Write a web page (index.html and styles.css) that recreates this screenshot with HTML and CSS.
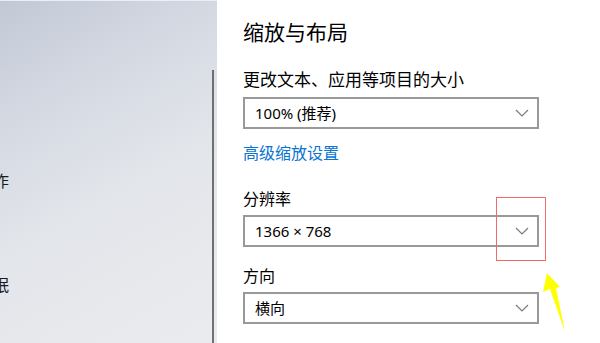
FILE: index.html
```html
<!DOCTYPE html>
<html lang="zh-CN">
<head>
<meta charset="utf-8">
<title>缩放与布局</title>
<link rel="stylesheet" href="styles.css">
</head>
<body>
<div class="page">
  <aside class="sidebar">
    <ul class="nav">
      <li>通知和操作</li>
      <li>电源和睡眠</li>
    </ul>
    <div class="scrollbar"></div>
  </aside>
  <main class="content">
    <h1 class="title">缩放与布局</h1>
    <div class="label label-wide">更改文本、应用等项目的大小</div>
    <div class="select">
      <span class="select-text">100% (推荐)</span>
      <svg class="chevron" width="14" height="8" viewBox="0 0 14 8"><polyline points="1,1 7,7 13,1" fill="none" stroke="#7a7a7a" stroke-width="1.2"/></svg>
    </div>
    <a class="link">高级缩放设置</a>
    <div class="label label-res">分辨率</div>
    <div class="select">
      <span class="select-text">1366 × 768</span>
      <svg class="chevron" width="14" height="8" viewBox="0 0 14 8"><polyline points="1,1 7,7 13,1" fill="none" stroke="#7a7a7a" stroke-width="1.2"/></svg>
    </div>
    <div class="label label-dir">方向</div>
    <div class="select">
      <span class="select-text">横向</span>
      <svg class="chevron" width="14" height="8" viewBox="0 0 14 8"><polyline points="1,1 7,7 13,1" fill="none" stroke="#7a7a7a" stroke-width="1.2"/></svg>
    </div>
  </main>
  <div class="highlight"></div>
  <svg class="arrow" width="30" height="64" viewBox="0 0 30 64">
    <polygon points="4,0 17,14 13,15 22,59 7,16 0,19" fill="#ffff00"/>
  </svg>
</div>
</body>
</html>
```
FILE: styles.css
```css
* { box-sizing: border-box; }
html, body {
  margin: 0;
  padding: 0;
  width: 600px;
  height: 343px;
  overflow: hidden;
  background: #ffffff;
  font-family: "Noto Sans CJK SC", "Noto Sans", sans-serif;
  color: #000;
}
.page {
  position: relative;
  display: flex;
  width: 600px;
  height: 343px;
}
.sidebar {
  width: 217px;
  flex: none;
  display: flex;
  overflow: hidden;
  border-top: 1px solid #eceef2;
  background: linear-gradient(150deg, #c2c9d6 0%, #d6dae3 30%, #e2e5ea 55%, #e8e9ed 80%, #eaebee 100%);
}
.nav {
  list-style: none;
  margin: 0 0 0 -71px;
  padding: 153px 0 0 0;
  flex: 1;
  font-size: 16px;
  color: #1a1a1a;
  display: flex;
  flex-direction: column;
  gap: 52px;
}
.nav li {
  height: 52px;
  line-height: 52px;
  white-space: nowrap;
}
.scrollbar {
  width: 2px;
  margin-top: 69px;
  margin-right: 3px;
  background: #707070;
  flex: none;
}
.content {
  flex: 1;
  padding: 17px 0 0 26px;
  display: flex;
  flex-direction: column;
  align-items: flex-start;
}
.title {
  margin: 0;
  font-size: 21px;
  font-weight: 400;
  line-height: 28px;
}
.label {
  font-size: 16px;
  line-height: 22px;
}
.label-wide {
  font-size: 17px;
  line-height: 24px;
  margin-top: 22px;
}
.label-res { margin-top: 24px; }
.label-dir { margin-top: 17px; }
.select {
  margin-top: 6px;
  width: 296px;
  height: 32px;
  border: 2px solid #999999;
  display: flex;
  align-items: center;
  justify-content: space-between;
  padding: 0 8px 0 10px;
  background: #fff;
}
.select-text {
  font-family: "Noto Sans", "Noto Sans CJK SC", sans-serif;
  font-size: 15px;
  line-height: 20px;
}
.chevron { display: block; }
.link {
  margin-top: 12px;
  font-size: 16px;
  line-height: 22px;
  color: #0a74d1;
  cursor: pointer;
}
.highlight {
  position: absolute;
  left: 496px;
  top: 197px;
  width: 50px;
  height: 64px;
  border: 1px solid #f36a6a;
}
.arrow {
  position: absolute;
  left: 543px;
  top: 273px;
}
```
